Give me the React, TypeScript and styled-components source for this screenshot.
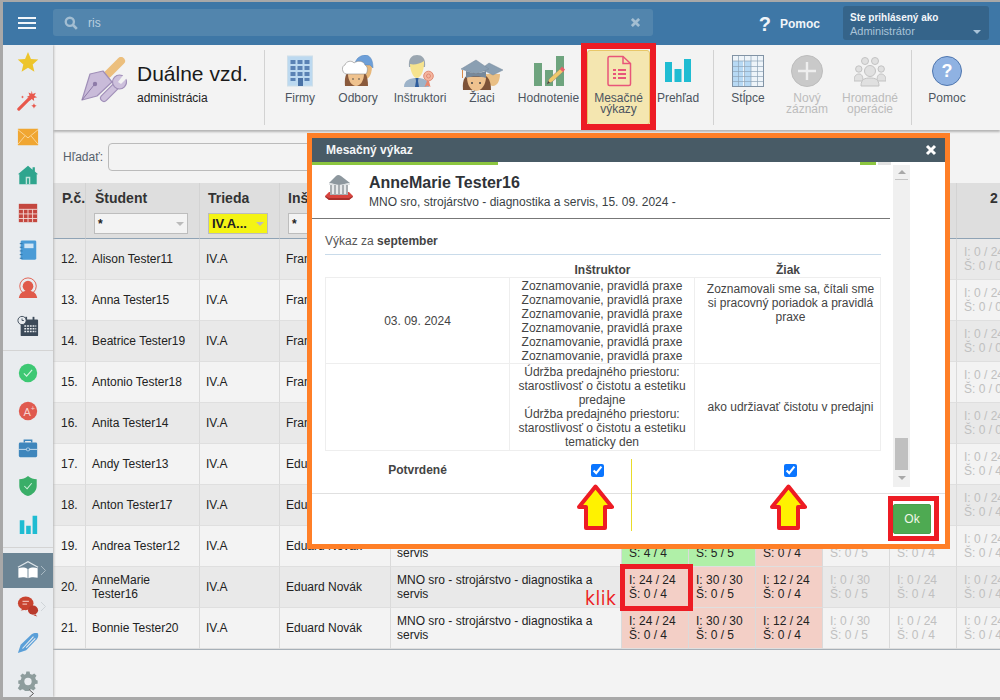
import React from "react";
import styled, { createGlobalStyle } from "styled-components";

const Global = createGlobalStyle`
  html, body { margin: 0; padding: 0; width: 1000px; height: 700px; overflow: hidden; }
  body { font-family: "Liberation Sans", Arial, sans-serif; font-size: 12px; color: #222; }
  * { box-sizing: border-box; }
`;

const Page = styled.div`
  position: relative; width: 1000px; height: 700px; overflow: hidden;
  background: #a8a8a8; padding: 2px 0 3px 3px; display: flex; flex-direction: column;
`;
const TopBar = styled.header`
  height: 43px; flex: none; background: #3e77a6; display: flex; align-items: center; padding-right: 11px;
`;
const Burger = styled.div`
  width: 50px; flex: none; padding-left: 15px; display: flex; flex-direction: column; gap: 3px; margin-top: -1px;
  span { display: block; width: 18px; height: 2px; background: #f2f6fa; }
`;
const SearchBox = styled.div`
  width: 600px; height: 27px; margin-top: -2px; background: #5285ad; border-radius: 3px; display: flex; align-items: center;
  padding: 0 13px 0 11px; color: #b9cfdf; font-size: 12px;
`;
const SearchValue = styled.span` margin-left: 10px; flex: 1; `;
const Help = styled.div`
  margin-left: auto; display: flex; align-items: center; gap: 9px; color: #f0f5f9; font-weight: bold; font-size: 12px; margin-right: 23px;
  b { font-size: 20px; line-height: 20px; }
`;
const UserBox = styled.div`
  width: 146px; height: 34px; margin-top: -2px; background: #35648a; border-radius: 3px; padding: 5px 7px; position: relative;
  color: #a9c3d8; line-height: 14px; font-size: 11px;
  strong { display: block; color: #f2f6fa; font-size: 10px; line-height: 13px; }
`;
const Caret = styled.i<{ $c?: string }>`
  display: inline-block; width: 0; height: 0; border-left: 4px solid transparent; border-right: 4px solid transparent;
  border-top: 4px solid ${p => p.$c || "#bbb"};
`;
const UserCaret = styled(Caret)` position: absolute; right: 8px; top: 24px; `;

const Body = styled.div` flex: 1; display: flex; min-height: 0; overflow: hidden; `;
const Sidebar = styled.nav`
  width: 50px; flex: none; background: #e9ecef; display: flex; flex-direction: column; box-shadow: 1px 0 2px #bbb; position: relative; z-index: 2;
`;
const SideGroup = styled.div<{ $top?: number }>` display: flex; flex-direction: column; gap: 3.7px; padding-top: ${p => p.$top || 0}px; `;
const SideItem = styled.div<{ $active?: boolean }>`
  height: ${p => (p.$active ? 35 : 34)}px; flex: none; display: flex; align-items: center; justify-content: center; position: relative;
  background: ${p => (p.$active ? "#6b8494" : "transparent")};
`;
const SideRule = styled.div<{ $before: number; $after: number }>`
  height: 1px; flex: none; background: #d4d4d4; margin-top: ${p => p.$before}px; margin-bottom: ${p => p.$after}px;
`;
const SideChevron = styled.svg` position: absolute; left: 37px; top: 12px; `;
const GearChevron = styled.svg` position: absolute; left: 25px; top: 25px; `;

const Main = styled.main` flex: 1; min-width: 0; background: #f3f3f3; display: flex; flex-direction: column; overflow: hidden; `;
const Ribbon = styled.section`
  height: 85px; flex: none; background: #f3f3f3; display: flex; padding-top: 5px; box-shadow: 0 2px 2px #b5b5b5; position: relative; z-index: 1;
`;
const Brand = styled.div` width: 211px; flex: none; padding: 7px 0 0 27px; display: flex; gap: 10px; `;
const BrandTitle = styled.div` font-size: 21px; line-height: 26px; color: #1a1a1a; margin-top: 4px; white-space: nowrap; `;
const BrandSub = styled.div` font-size: 12px; line-height: 14px; color: #222; margin-top: 4px; `;
const RibbonRule = styled.div<{ $ml?: number }>`
  width: 1px; height: 75px; flex: none; background: #d2d2d2; margin-left: ${p => p.$ml || 0}px;
`;
const RibbonItem = styled.div<{ $w: number; $ml?: number; $off?: boolean; $on?: boolean }>`
  width: ${p => p.$w}px; height: 75px; flex: none; margin-left: ${p => p.$ml || 0}px; display: flex; flex-direction: column; align-items: center;
  padding-top: 4px; border: 1px solid ${p => (p.$on ? "#e8c768" : "transparent")}; border-radius: 3px;
  background: ${p => (p.$on ? "#f4e6b0" : "transparent")};
  color: ${p => (p.$off ? "#bcbcbc" : "#4d5560")}; text-align: center; line-height: 11px; font-size: 12px; white-space: nowrap;
  svg { flex: none; margin-bottom: 6px; }
`;

const SearchRow = styled.div`
  height: 53px; flex: none; display: flex; align-items: center; padding: 0 0 0 10px; gap: 5px; color: #55606a; font-size: 12px;
`;
const SearchInput = styled.div` width: 300px; height: 28px; border: 1px solid #bbb; border-radius: 4px; background: #f3f3f3; `;

const TableWrap = styled.div` overflow: hidden; `;
const Grid = styled.table`
  table-layout: fixed; width: 971px; border-collapse: separate; border-spacing: 0;
  border-bottom: 1px solid #a7b0b8;
`;
const Th = styled.th<{ $pad?: number; $center?: boolean }>`
  height: 56px; padding: 7px 0 0 ${p => p.$pad || 8}px; vertical-align: top; background: #dedede; text-align: ${p => (p.$center ? "center" : "left")};
  border-right: 1px solid #d3d3d3; border-bottom: 1px solid #8fa3b5; font-size: 14px; line-height: 16px; color: #333; font-weight: bold; white-space: nowrap;
  overflow: hidden;
`;
const Filter = styled.div<{ $w: number; $hot?: boolean; $ml?: number }>`
  width: ${p => p.$w}px; height: 21px; margin-top: 7px; margin-left: ${p => p.$ml || 0}px; border: 1px solid #bdbdbd; background: ${p => (p.$hot ? "#f4f414" : "#f3f3f3")};
  display: flex; align-items: center; justify-content: space-between; padding: 0 3px; color: #222;
  font-size: ${p => (p.$hot ? 13 : 12)}px;
`;
const Tr = styled.tr<{ $odd: boolean }>` background: ${p => (p.$odd ? "#e9e9e9" : "#f3f3f3")}; `;
const Td = styled.td<{ $pl?: number; $pr?: number }>`
  height: 41px; padding: 0 ${p => p.$pr ?? 6}px 0 ${p => p.$pl ?? 6}px; border-right: 1px solid #dadada; border-bottom: 1px solid #dfdfdf;
  font-size: 12px; line-height: 14px; color: #222; overflow: hidden; white-space: normal;
`;
const Mark = styled(Td)<{ $tone: "red" | "green" | "none" }>`
  padding: 0 0 0 7px; white-space: nowrap;
  background: ${p => (p.$tone === "red" ? "#f3cfc6" : p.$tone === "green" ? "#b0f0a8" : "transparent")};
  color: ${p => (p.$tone === "none" ? "#c0c0c0" : "#222")};
`;

const Modal = styled.section`
  position: absolute; left: 307px; top: 133px; width: 643px; height: 416px; border: 5px solid #ff7f27; background: #fff; z-index: 5;
  display: flex; flex-direction: column;
`;
const ModalTitle = styled.div`
  height: 24px; flex: none; background: #485b66; color: #f4f6f7; font-weight: bold; font-size: 12px; display: flex; align-items: center;
  justify-content: space-between; padding: 0 8px 0 14px;
`;
const Progress = styled.div` height: 3px; flex: none; display: flex; padding-right: 54px; `;
const ProgressBit = styled.div<{ $w: number; $c: string; $ml?: string }>`
  width: ${p => p.$w}px; background: ${p => p.$c}; margin-left: ${p => p.$ml || 0};
`;
const ModalMid = styled.div` height: 322px; flex: none; display: flex; `;
const Scroller = styled.div` width: 578px; flex: none; overflow: hidden; `;
const Person = styled.div`
  height: 54px; border-bottom: 1px solid #777; padding: 8px 0 0 13px; display: flex; gap: 16px;
`;
const PersonName = styled.div` font-size: 16px; line-height: 20px; font-weight: bold; color: #2f3338; `;
const PersonSub = styled.div` font-size: 12px; line-height: 14px; color: #3a3f45; margin-top: 2px; `;
const Section = styled.div` padding: 0 9px 0 13px; `;
const Caption = styled.div`
  height: 36px; padding-top: 15px; line-height: 14px; border-bottom: 1px solid #c9dbea; color: #555; font-size: 12px;
  b { color: #444; }
`;
const Cols = styled.div` display: grid; grid-template-columns: 185px 185px 186px; `;
const ColHead = styled.div`
  height: 22px; padding-top: 8px; line-height: 14px; text-align: center; font-weight: bold; color: #444; font-size: 12px;
`;
const Cell = styled.div<{ $middle?: boolean; $top?: number; $first?: boolean; $shift?: boolean }>`
  border: 1px solid #eee; border-left-width: ${p => (p.$first ? 1 : 0)}px; margin-top: -1px;
  padding: ${p => p.$top ?? 1}px 4px 1px ${p => (p.$shift ? 10 : 4)}px;
  text-align: center; line-height: 14px; color: #444; font-size: 12px; height: 88px;
  display: flex; align-items: ${p => (p.$middle ? "center" : "flex-start")}; justify-content: center;
  &:nth-child(-n+6) { margin-top: 0; height: 87px; }
`;
const ConfirmLabel = styled.div` height: 36px; padding-top: 12px; line-height: 14px; font-weight: bold; color: #444; text-align: center; `;
const ConfirmCell = styled.div<{ $off: number }>`
  height: 36px; padding: 13px 0 0 ${p => p.$off}px;
  input { display: block; width: 13px; height: 13px; margin: 0; accent-color: #0a75ff; }
`;
const Scrollbar = styled.div`
  width: 17px; flex: none; margin-left: 3px; background: #f0f0f0; display: flex; flex-direction: column; align-items: center; padding: 5px 2px 7px;
`;
const ScrollUp = styled.i`
  width: 0; height: 0; border-left: 4px solid transparent; border-right: 4px solid transparent; border-bottom: 4px solid #a8a8a8; margin-bottom: 5px;
`;
const ScrollLine = styled.div` width: 13px; height: 1px; background: #c4c4c4; flex: none; `;
const ScrollThumb = styled.div` width: 13px; height: 32px; background: #c0c0c0; margin-top: auto; margin-bottom: 6px; flex: none; `;
const ModalFoot = styled.div`
  flex: 1; margin-top: 6px; border-top: 1px solid #e0e0e0; padding: 10px 14px 0 0; display: flex; justify-content: flex-end; align-items: flex-start;
`;
const OkButton = styled.button`
  width: 38px; height: 30px; padding: 0; border: 1px solid #4a9f4d; border-radius: 2px; background: #4eaa52; color: #f2f7e8;
  font: 12px "Liberation Sans", Arial, sans-serif;
`;
const Rule = styled.div` position: absolute; left: 319px; top: 321px; width: 1px; height: 72px; background: #e8dc2a; `;

const RedBox = styled.div<{ $x: number; $y: number; $w: number; $h: number; $b?: number }>`
  position: absolute; left: ${p => p.$x}px; top: ${p => p.$y}px; width: ${p => p.$w}px; height: ${p => p.$h}px;
  border: ${p => p.$b || 5}px solid #ed1c24; z-index: 8; pointer-events: none;
`;
const ArrowMark = styled.svg<{ $x: number }>` position: absolute; left: ${p => p.$x}px; top: 484px; z-index: 8; `;
const Klik = styled.span`
  position: absolute; left: 585px; top: 587px; z-index: 8; color: #ed1c24; font: 17px "DejaVu Sans", sans-serif; letter-spacing: 0.6px;
  transform: scaleY(1.1); transform-origin: left top;
`;

const Ico = ({ s = 22, v = "0 0 24 24", children }: { s?: number; v?: string; children: React.ReactNode }) => (
  <svg width={s} height={s} viewBox={v}>{children}</svg>
);

const sideTop: React.ReactNode[] = [
  <Ico><polygon points="12,1 15.2,8.6 23.2,9.3 17.1,14.6 19,22.6 12,18.3 5,22.6 6.9,14.6 0.8,9.3 8.8,8.6" fill="#edc52b" /></Ico>,
  <Ico><path d="M2 22 L14 10" stroke="#e8584c" strokeWidth="3.4" strokeLinecap="round" /><path d="M16 2l1 3.4 3.6-1.2-1.7 3.2 3.1 1.6-3.6.7.3 3.5-2.6-2.4-2.6 2.2.4-3.4-3.3-1 3.1-1.6-1.2-3.2 3 1.3z" fill="#e8584c" /><path d="M18.5 15.5l.9 2 2 .9-2 .9-.9 2-.9-2-2-.9 2-.9z" fill="#e8584c" /><path d="M6 7l.5 1.2 1.2.5-1.2.5L6 10.4l-.5-1.2-1.2-.5 1.2-.5z" fill="#e8584c" /></Ico>,
  <Ico><rect x="1" y="3" width="22" height="18" fill="#f0a632" /><path d="M1 4 L12 13 L23 4 M1 20 L8.5 11 M23 20 L15.5 11" stroke="#fbd9a0" strokeWidth="1" fill="none" /></Ico>,
  <Ico><path d="M12 2 L17 6.2 V3.5 H19.5 V8.2 L23 11.2 H21.5 V22 H2.5 V11.2 H1 Z" fill="#2fa58e" /><path d="M9.5 22 V14 H14.5 V22 M11 15.5 H13 V22 H11 Z" fill="#bfe3da" fillRule="evenodd" /></Ico>,
  <Ico><rect x="2" y="2" width="20" height="20" fill="#c4473f" /><path d="M2 8 H22 M2 13 H22 M2 18 H22 M7 8 V22 M12 8 V22 M17 8 V22" stroke="#f3d9d5" strokeWidth="1" /></Ico>,
  <Ico><rect x="4" y="1.5" width="17" height="21" rx="1.5" fill="#4a9bd6" /><rect x="8" y="5" width="10" height="5" fill="#cfe5f5" /><path d="M3 5h3M3 9h3M3 13h3M3 17h3M3 21h3" stroke="#2e74a8" strokeWidth="1" /></Ico>,
  <Ico><circle cx="12" cy="10" r="9" fill="none" stroke="#e05a4a" strokeWidth="1" /><circle cx="12" cy="10" r="5.8" fill="#e05a4a" /><path d="M2 23 C3 16 8 15 12 15 C16 15 21 16 22 23 Z" fill="#e05a4a" /></Ico>,
  <Ico><rect x="4" y="5" width="19" height="18" rx="1" fill="#3c4a59" /><rect x="9" y="2" width="2" height="5" fill="#3c4a59" /><rect x="17" y="2" width="2" height="5" fill="#3c4a59" /><path d="M8 12h13M8 15h13M8 18h13" stroke="#e8ecef" strokeWidth="1.5" strokeDasharray="2 1" /><circle cx="5.5" cy="6" r="4.5" fill="#e9ecef" stroke="#3c4a59" strokeWidth="1" /><path d="M5.5 3.8V6H7.5" stroke="#3c4a59" strokeWidth="1" fill="none" /></Ico>,
];
const sideMid: React.ReactNode[] = [
  <Ico><circle cx="12" cy="12" r="10" fill="#3dc873" /><path d="M7.5 12.5l3 3 6-7" stroke="#d5f5e2" strokeWidth="1.2" fill="none" /></Ico>,
  <Ico><circle cx="12" cy="12" r="10" fill="#e05a4f" /><text x="7" y="17" fontSize="12" fill="#f7d3cf" fontFamily="Liberation Sans">A</text><text x="15" y="12" fontSize="8" fill="#f7d3cf" fontFamily="Liberation Sans">+</text></Ico>,
  <Ico><path d="M8 6V3.5h8V6" fill="none" stroke="#3f86bc" strokeWidth="1.6" /><rect x="2" y="6" width="20" height="16" rx="1.5" fill="#3f86bc" /><path d="M2 13.5H22" stroke="#cfe2f0" strokeWidth="1" /><rect x="10.3" y="12" width="3.4" height="3" rx="1" fill="#3f86bc" stroke="#cfe2f0" strokeWidth=".8" /></Ico>,
  <Ico><path d="M12 1 C15 3.5 18 4.3 21.5 4.5 V12 C21.5 17.5 17 21.5 12 23 C7 21.5 2.5 17.5 2.5 12 V4.5 C6 4.3 9 3.5 12 1Z" fill="#3aae68" /><path d="M8 12l3 3 5-6" stroke="#d5f2e0" strokeWidth="1.1" fill="none" /></Ico>,
  <Ico><path d="M3 8h5v15H3zM10 14h5v9h-5zM17 3h5v20h-5z" fill="#1fbcd2" /></Ico>,
];

const Icons = {
  brand: (
    <svg width="47" height="46" viewBox="0 0 47 46">
      <path d="M28 17 L41 4" stroke="#ecbf7d" strokeWidth="8" strokeLinecap="round" />
      <path d="M2 43 L10 17 L23 14 L32 25 L17 39 Z" fill="#c9bbd9" stroke="#a08fb8" strokeWidth="1.2" strokeLinejoin="round" />
      <path d="M2 43 L14 28" stroke="#8e7ba8" strokeWidth="1" /><circle cx="15" cy="27" r="2.2" fill="#8e7ba8" />
      <path d="M24 41 L38 27" stroke="#a08fb8" strokeWidth="8" strokeLinecap="round" />
      <path d="M24 41 L38 27" stroke="#cdc0dc" strokeWidth="5.6" strokeLinecap="round" />
      <circle cx="39.5" cy="25" r="7" fill="#cdc0dc" stroke="#a08fb8" strokeWidth="1.2" />
      <path d="M38 25 L44 17 L47 21 L41 27 Z" fill="#f3f3f3" />
    </svg>
  ),
  firmy: (
    <Ico s={32} v="0 0 32 32">
      <rect x="3.5" y="1" width="25" height="30" fill="#bcd9f0" stroke="#cfdfe9" />
      <path d="M6.5 5h5v4h-5zM13.5 5h5v4h-5zM20.5 5h5v4h-5zM6.5 11h5v4h-5zM13.5 11h5v4h-5zM20.5 11h5v4h-5zM6.5 17h5v4h-5zM13.5 17h5v4h-5zM20.5 17h5v4h-5zM6.5 23h5v3h-5zM20.5 23h5v3h-5z" fill="#5a82b4" />
      <rect x="14" y="23" width="5" height="8" fill="#4a72a6" />
    </Ico>
  ),
  odbory: (
    <Ico s={32} v="0 0 32 32">
      <path d="M17 10 H30 C30 18 28 24 23 24 C19 24 17 18 17 10Z" fill="#e8b87a" />
      <path d="M13 9 C14 2 20 0 24 0 C29 1 31 6 31 13 L28 10 L14 10Z" fill="#6d9fd8" stroke="#5585bd" strokeWidth=".5" />
      <path d="M3 31 C2 20 5 14 14 14 C23 14 26 20 26 31 Z" fill="#8a5a3c" />
      <path d="M6 19 H22 C22 26 18 31 14 31 C10 31 6 26 6 19Z" fill="#efc28e" />
      <path d="M4 19 C0 18 -1 11 3 10 C4 6 10 5 12 8 C16 5 22 6 23 10 C27 12 25 18 24 19Z" fill="#fff" stroke="#8a8a8a" strokeWidth=".6" />
      <circle cx="11" cy="24" r=".8" fill="#444" /><circle cx="17" cy="24" r=".8" fill="#444" />
    </Ico>
  ),
  instr: (
    <Ico s={32} v="0 0 32 32">
      <path d="M0 32 C0 25 6 23 13 23 C20 23 25 25 25 32Z" fill="#9db3c9" />
      <path d="M11.5 23 h3 l-.5 3 l1 6 h-4 l1-6z" fill="#2d5c9c" />
      <path d="M5 12 C4 3 8 0 13 0 C18 0 22 3 21 12 L19 12 L7 12Z" fill="#9aa6b0" />
      <path d="M6 9 C10 10 16 9 20 6 C20.5 15 17 23 13 23 C9 23 6 15 6 9Z" fill="#f6e38e" />
      <path d="M23 26 l-2.5 6 l3-1.5 l3 1.5 l-1.5-6z" fill="#e8876f" />
      <circle cx="24.5" cy="21" r="4.8" fill="#f4b59e" stroke="#e08a74" /><circle cx="24.5" cy="21" r="2" fill="none" stroke="#e08a74" />
    </Ico>
  ),
  ziaci: (
    <Ico s={42} v="0 0 42 42">
      <g transform="translate(0 5)">
        <path d="M24 14 H39 C39 21 36 26 32 26 C28 26 24 21 24 14Z" fill="#e9bf85" />
        <path d="M20 9 L28 3 L42 10 L32 15Z" fill="#8a9fb2" stroke="#76899b" strokeWidth=".5" />
        <path d="M2 30 C1 19 4 13 15 13 C26 13 30 19 30 30Z" fill="#7d5237" />
        <path d="M6 17 H25 C25 25 20 31 15 31 C10 31 6 25 6 17Z" fill="#efc28e" />
        <path d="M0 9 L15 0 L28 9 L15 14Z" fill="#8a9fb2" stroke="#76899b" strokeWidth=".5" />
        <path d="M5 11 V18 C10 16 20 16 25 18 V11 L15 14Z" fill="#77899b" />
        <circle cx="11" cy="23" r="1" fill="#444" /><circle cx="19" cy="23" r="1" fill="#444" />
        <path d="M1.5 10 V18" stroke="#d98a4a" strokeWidth="1" />
      </g>
    </Ico>
  ),
  hodn: (
    <Ico s={32} v="0 0 32 32">
      <path d="M1 8h8v23H1zM12 15h8v16h-8zM23 1h8v30h-8z" fill="#6ea47e" />
      <path d="M14 29 L16 24 L28 13 L31 16 L19 27 Z" fill="#efc86a" stroke="#777" strokeWidth=".5" />
      <path d="M26.8 14.2 L29 11.5 L32 14.5 L30 17Z" fill="#e8606a" /><path d="M14 29 L15.2 26 L17 27.7Z" fill="#444" />
    </Ico>
  ),
  doc: (
    <Ico s={32} v="0 0 32 32">
      <path d="M5 3 Q5 1.5 6.5 1.5 H20 L27.5 8.5 V29 Q27.5 30.5 26 30.5 H6.5 Q5 30.5 5 29Z" fill="none" stroke="#e8557a" strokeWidth="1.5" />
      <path d="M20 1.5 V8.5 H27.5" fill="none" stroke="#e8557a" strokeWidth="1.5" />
      <path d="M10 14h3v2h-3zM10 18h3v2h-3zM10 22h3v2h-3zM15 14h8v2h-8zM15 18h8v2h-8zM15 22h8v2h-8z" fill="#e8557a" />
    </Ico>
  ),
  bars: (
    <Ico s={32} v="0 0 32 32">
      <path d="M3 7h7v20H3zM12.5 14h7v13h-7zM22 4h7v23h-7z" fill="#1fbcd2" />
    </Ico>
  ),
  cols: (
    <Ico s={32} v="0 0 32 32">
      <rect x="0.5" y="0.5" width="31" height="31" fill="#eef4f9" stroke="#8193a5" />
      <path d="M1 6h10v25H1zM13 6h6v25h-6z" fill="#b7d9f4" />
      <path d="M6.5 1V31M12.5 1V31M19 1V31M25.5 1V31M1 6H31M1 11.5H31M1 16.5H31M1 21.5H31M1 26.5H31" stroke="#8ea4b8" strokeWidth=".7" />
    </Ico>
  ),
  plus: (
    <Ico s={32} v="0 0 32 32">
      <circle cx="16" cy="16" r="15.5" fill="#c9c9c9" stroke="#bdbdbd" />
      <path d="M16 7V25M7 16H25" stroke="#eeeeee" strokeWidth="2.4" />
    </Ico>
  ),
  group: (
    <Ico s={32} v="0 0 32 32">
      <g fill="#e0e0e0" stroke="#c3c3c3" strokeWidth="1">
        <circle cx="11" cy="6" r="3.5" /><circle cx="21" cy="6" r="3.5" />
        <circle cx="4.8" cy="14" r="3.2" /><circle cx="27.2" cy="14" r="3.2" />
        <path d="M0 26 C0 20 3 19 5 19 C7 19 9 20 9 26Z" /><path d="M23 26 C23 20 25 19 27 19 C29 19 32 20 32 26Z" />
        <path d="M7 31 C7 24 11 23 16 23 C21 23 25 24 25 31Z" /><circle cx="16" cy="16" r="5.5" />
      </g>
    </Ico>
  ),
  help: (
    <Ico s={32} v="0 0 32 32">
      <circle cx="16" cy="16" r="14.5" fill="#8fb2e2" stroke="#4f76ae" strokeWidth="1" />
      <text x="16" y="22" fontSize="18" fontWeight="bold" fill="#fff" textAnchor="middle" fontFamily="Liberation Sans">?</text>
    </Ico>
  ),
  bank: (
    <svg width="28" height="28" viewBox="0 0 28 28">
      <path d="M0 23 L4 19 H24 L28 23 L24 27 H4Z" fill="#d8453f" />
      <path d="M4 25 H24 L28 23 V24 L24 27 H4 L0 24 V23Z" fill="#a8302c" />
      <rect x="5" y="11" width="18" height="11" fill="#a9aeb2" />
      <path d="M8 12v9M12 12v9M16 12v9M20 12v9" stroke="#eef0f1" strokeWidth="1.8" />
      <path d="M4 10 L11 3 Q13 1 16 3 L25 10 L14 12Z" fill="#8d979e" />
      <path d="M4 10 L14 12 L25 10 V12 H4Z" fill="#dfe2e4" />
    </svg>
  ),
};

const ribbonItems = [
  { w: 60, ml: 5, label: ["Firmy"], icon: Icons.firmy },
  { w: 56, label: ["Odbory"], icon: Icons.odbory },
  { w: 68, label: ["Inštruktori"], icon: Icons.instr },
  { w: 56, label: ["Žiaci"], icon: Icons.ziaci, tall: true },
  { w: 77, label: ["Hodnotenie"], icon: Icons.hodn },
  { w: 63, on: true, label: ["Mesačné", "výkazy"], icon: Icons.doc },
  { w: 56, label: ["Prehľad"], icon: Icons.bars },
];
const ribbonItems2 = [
  { w: 68, label: ["Stĺpce"], icon: Icons.cols },
  { w: 50, off: true, label: ["Nový", "záznam"], icon: Icons.plus },
  { w: 76, off: true, label: ["Hromadné", "operácie"], icon: Icons.group },
];

const StudentsIcon = styled.div`
  height: 32px; margin-bottom: 6px; display: flex; align-items: flex-start; flex: none;
  svg { margin: 0; }
`;

const Label = ({ lines }: { lines: string[] }) => (
  <>{lines.map((l, i) => <span key={i}>{l}</span>)}</>
);

type Tone = "red" | "green" | "none";
type Row = { n: number; name: string; ins: string; m: [string, string, Tone][] };
const FIRM = "MNO sro - strojárstvo - diagnostika a servis";
const rows: Row[] = ([
  ["Alison Tester11", "František Kováč", 12],
  ["Anna Tester15", "František Kováč", 13],
  ["Beatrice Tester19", "František Kováč", 14],
  ["Antonio Tester18", "František Kováč", 15],
  ["Anita Tester14", "František Kováč", 16],
  ["Andy Tester13", "Eduard Novák", 17],
  ["Anton Tester17", "Eduard Novák", 18],
  ["Andrea Tester12", "Eduard Novák", 19],
  ["AnneMarie Tester16", "Eduard Novák", 20],
  ["Bonnie Tester20", "Eduard Novák", 21],
] as [string, string, number][]).map(([name, ins, n]) => {
  const last = n <= 16 ? "Š: 0 / 0" : "Š: 0 / 4";
  const lastCell: [string, string, Tone] = ["I: 0 / 24", last, "none"];
  if (n < 19) {
    const blank: [string, string, Tone] = ["", "", "none"];
    return { n, name, ins, m: [blank, blank, blank, blank, blank, lastCell] };
  }
  const first: [string, string, Tone][] =
    n === 19
      ? [["I: 24 / 24", "Š: 4 / 4", "green"], ["I: 30 / 30", "Š: 5 / 5", "green"], ["I: 12 / 24", "Š: 0 / 4", "red"]]
      : [["I: 24 / 24", "Š: 0 / 4", "red"], ["I: 30 / 30", "Š: 0 / 5", "red"], ["I: 12 / 24", "Š: 0 / 4", "red"]];
  return { n, name, ins, m: [...first, ["I: 0 / 30", "Š: 0 / 5", "none"], ["I: 0 / 24", "Š: 0 / 4", "none"], lastCell] };
});

const colWidths = [33, 114, 80, 111, 231, 67, 67, 67, 67, 67, 67];
const Arrow = ({ x }: { x: number }) => (
  <ArrowMark $x={x} width="37" height="47" viewBox="0 0 37 47">
    <polygon points="18.5,2.5 35,23 28,23 28,44 9,44 9,23 2,23" fill="#fff200" stroke="#ed1c24" strokeWidth="4" strokeLinejoin="round" />
  </ArrowMark>
);

export default function App() {
  return (
    <Page>
      <Global />
      <TopBar>
        <Burger><span /><span /><span /></Burger>
        <SearchBox>
          <Ico s={14} v="0 0 24 24"><circle cx="10" cy="10" r="7" fill="none" stroke="#a3bed2" strokeWidth="4" /><path d="M15 15l7 7" stroke="#a3bed2" strokeWidth="4.5" /></Ico>
          <SearchValue>ris</SearchValue>
          <Ico s={9} v="0 0 10 10"><path d="M1 1l8 8M9 1l-8 8" stroke="#a3bed2" strokeWidth="3" /></Ico>
        </SearchBox>
        <Help><b>?</b><span>Pomoc</span></Help>
        <UserBox>
          <strong>Ste prihlásený ako</strong>
          Administrátor
          <UserCaret $c="#a9c3d8" />
        </UserBox>
      </TopBar>
      <Body>
        <Sidebar>
          <SideGroup>{sideTop.map((c, i) => <SideItem key={i}>{c}</SideItem>)}</SideGroup>
          <SideRule $before={7} $after={5} />
          <SideGroup>{sideMid.map((c, i) => <SideItem key={i}>{c}</SideItem>)}</SideGroup>
          <SideRule $before={6} $after={5} />
          <SideItem $active>
            <Ico s={22}><path d="M1 9 L12 3 L23 9" fill="none" stroke="#dfe6ea" strokeWidth="1.2" /><path d="M1.5 10 C5 9 9 9 11.5 11 V21 C9 19.5 5 19.5 1.5 20.5Z M12.5 11 C15 9 19 9 22.5 10 V20.5 C19 19.5 15 19.5 12.5 21Z" fill="#fff" /></Ico>
            <SideChevron width="7" height="11" viewBox="0 0 7 11"><path d="M1 1l4.5 4.5L1 10" fill="none" stroke="#a9b9c3" strokeWidth="1" /></SideChevron>
          </SideItem>
          <SideGroup $top={1}>
            <SideItem>
              <Ico><ellipse cx="9.5" cy="9" rx="8.5" ry="7.5" fill="#c8432f" /><path d="M4 17l3-3 3 2z" fill="#c8432f" /><path d="M6 7h7M6 10h5" stroke="#eeb8ae" strokeWidth="1.2" /><ellipse cx="17.5" cy="16.5" rx="5.5" ry="5" fill="#b93a2c" /><path d="M20 21l2 2.5-4-1.5z" fill="#b93a2c" /></Ico>
              <SideChevron width="7" height="11" viewBox="0 0 7 11"><path d="M1 1l4.5 4.5L1 10" fill="none" stroke="#cfd4d8" strokeWidth="1" /></SideChevron>
            </SideItem>
            <SideItem>
              <Ico><path d="M1 23 L4 14 L16 2.5 C18 1 21 0.5 23 1.5 C23.5 4 23 6 21.5 8 L10 20 Z" fill="#5a9fd8" /><path d="M6 18 L18 5 M10 17 L20 7" stroke="#e9ecef" strokeWidth="1.2" /></Ico>
            </SideItem>
            <SideItem>
              <Ico><path d="M10 1h4l.6 3 2.6 1.1 2.6-1.7 2.8 2.8-1.7 2.6L22 11.4l2 .6v4l-3 .6-1.1 2.6 1.7 2.6-2.8 2.8-2.6-1.7-2.6 1.1-.6 1h-5l-.6-1-2.6-1.1-2.6 1.7-2.8-2.8 1.7-2.6L2 16.6 0 16v-4l3-.6 1.1-2.6-1.7-2.6 2.8-2.8 2.6 1.7L9.4 4z" fill="#8e9d9d" transform="translate(1.4 .8) scale(.88)" /><circle cx="12" cy="12.5" r="4" fill="#e9ecef" /></Ico>
              <GearChevron width="7" height="9" viewBox="0 0 7 9"><path d="M1 0.5l4.5 4L1 8.5" fill="none" stroke="#555" strokeWidth="1" /></GearChevron>
            </SideItem>
          </SideGroup>
        </Sidebar>
        <Main>
          <Ribbon>
            <Brand>
              {Icons.brand}
              <div>
                <BrandTitle>Duálne vzd.</BrandTitle>
                <BrandSub>administrácia</BrandSub>
              </div>
            </Brand>
            <RibbonRule />
            {ribbonItems.map((r, i) => (
              <RibbonItem key={i} $w={r.w} $ml={r.ml} $on={r.on}>
                {r.tall ? <StudentsIcon>{r.icon}</StudentsIcon> : r.icon}
                <Label lines={r.label} />
              </RibbonItem>
            ))}
            <RibbonRule $ml={7} />
            {ribbonItems2.map((r, i) => (
              <RibbonItem key={i} $w={r.w} $off={r.off}>{r.icon}<Label lines={r.label} /></RibbonItem>
            ))}
            <RibbonRule $ml={3} />
            <RibbonItem $w={70}>{Icons.help}<span>Pomoc</span></RibbonItem>
          </Ribbon>
          <SearchRow>Hľadať:<SearchInput /></SearchRow>
          <TableWrap>
            <Grid>
              <colgroup>{colWidths.map((w, i) => <col key={i} width={w} />)}</colgroup>
              <thead>
                <tr>
                  <Th $pad={9}>P.č.</Th>
                  <Th $pad={9}>Študent<Filter $w={94} $ml={-1}>*<Caret $c="#bbb" /></Filter></Th>
                  <Th>Trieda<Filter $w={60} $hot>IV.A...<Caret $c="#bbb" /></Filter></Th>
                  <Th>Inš<Filter $w={93}>*<Caret $c="#bbb" /></Filter></Th>
                  <Th />
                  <Th /><Th /><Th /><Th /><Th /><Th $center>2</Th>
                </tr>
              </thead>
              <tbody>
                {rows.map((r, i) => (
                  <Tr key={r.n} $odd={i % 2 === 0}>
                    <Td $pl={8}>{r.n}.</Td>
                    <Td $pr={10}>{r.name}</Td>
                    <Td>IV.A</Td>
                    <Td>{r.ins}</Td>
                    <Td>{r.n >= 19 ? FIRM : ""}</Td>
                    {r.m.map((c, j) => (
                      <Mark key={j} $tone={c[2]}>{c[0]}{c[0] && <br />}{c[1]}</Mark>
                    ))}
                  </Tr>
                ))}
              </tbody>
            </Grid>
          </TableWrap>
        </Main>
      </Body>

      <Modal>
        <ModalTitle>
          Mesačný výkaz
          <Ico s={12} v="0 0 12 12"><path d="M2 2l8 8M10 2l-8 8" stroke="#fff" strokeWidth="3" /></Ico>
        </ModalTitle>
        <Progress>
          <ProgressBit $w={186} $c="#8cc63f" />
          <ProgressBit $w={16} $c="#8cc63f" $ml="auto" />
          <ProgressBit $w={13} $c="#e2e2e2" $ml="2px" />
        </Progress>
        <ModalMid>
          <Scroller>
            <Person>
              {Icons.bank}
              <div>
                <PersonName>AnneMarie Tester16</PersonName>
                <PersonSub>MNO sro, strojárstvo - diagnostika a servis, 15. 09. 2024 -</PersonSub>
              </div>
            </Person>
            <Section>
              <Caption>Výkaz za <b>september</b></Caption>
              <Cols>
                <ColHead />
                <ColHead>Inštruktor</ColHead>
                <ColHead>Žiak</ColHead>
                <Cell $middle $first>03. 09. 2024</Cell>
                <Cell>
                  <div>Zoznamovanie, pravidlá praxe<br />Zoznamovanie, pravidlá praxe<br />Zoznamovanie, pravidlá praxe<br />Zoznamovanie, pravidlá praxe<br />Zoznamovanie, pravidlá praxe<br />Zoznamovanie, pravidlá praxe</div>
                </Cell>
                <Cell $top={4} $shift>
                  <div>Zoznamovali sme sa, čítali sme<br />si pracovný poriadok a pravidlá<br />praxe</div>
                </Cell>
                <Cell $first />
                <Cell>
                  <div>Údržba predajného priestoru:<br />starostlivosť o čistotu a estetiku<br />predajne<br />Údržba predajného priestoru:<br />starostlivosť o čistotu a estetiku<br />tematicky den</div>
                </Cell>
                <Cell $middle $shift>ako udržiavať čistotu v predajni</Cell>
                <ConfirmLabel>Potvrdené</ConfirmLabel>
                <ConfirmCell $off={81}><input type="checkbox" checked readOnly /></ConfirmCell>
                <ConfirmCell $off={89}><input type="checkbox" checked readOnly /></ConfirmCell>
              </Cols>
            </Section>
          </Scroller>
          <Scrollbar>
            <ScrollUp />
            <ScrollLine />
            <ScrollThumb />
            <Caret $c="#a8a8a8" />
          </Scrollbar>
        </ModalMid>
        <ModalFoot><OkButton>Ok</OkButton></ModalFoot>
        <Rule />
      </Modal>

      <RedBox $x={581} $y={43} $w={75} $h={87} $b={6} />
      <RedBox $x={888} $y={496} $w={51} $h={45} />
      <RedBox $x={620} $y={564} $w={73} $h={47} />
      <Arrow x={577} />
      <Arrow x={770} />
      <Klik>klik</Klik>
    </Page>
  );
}
